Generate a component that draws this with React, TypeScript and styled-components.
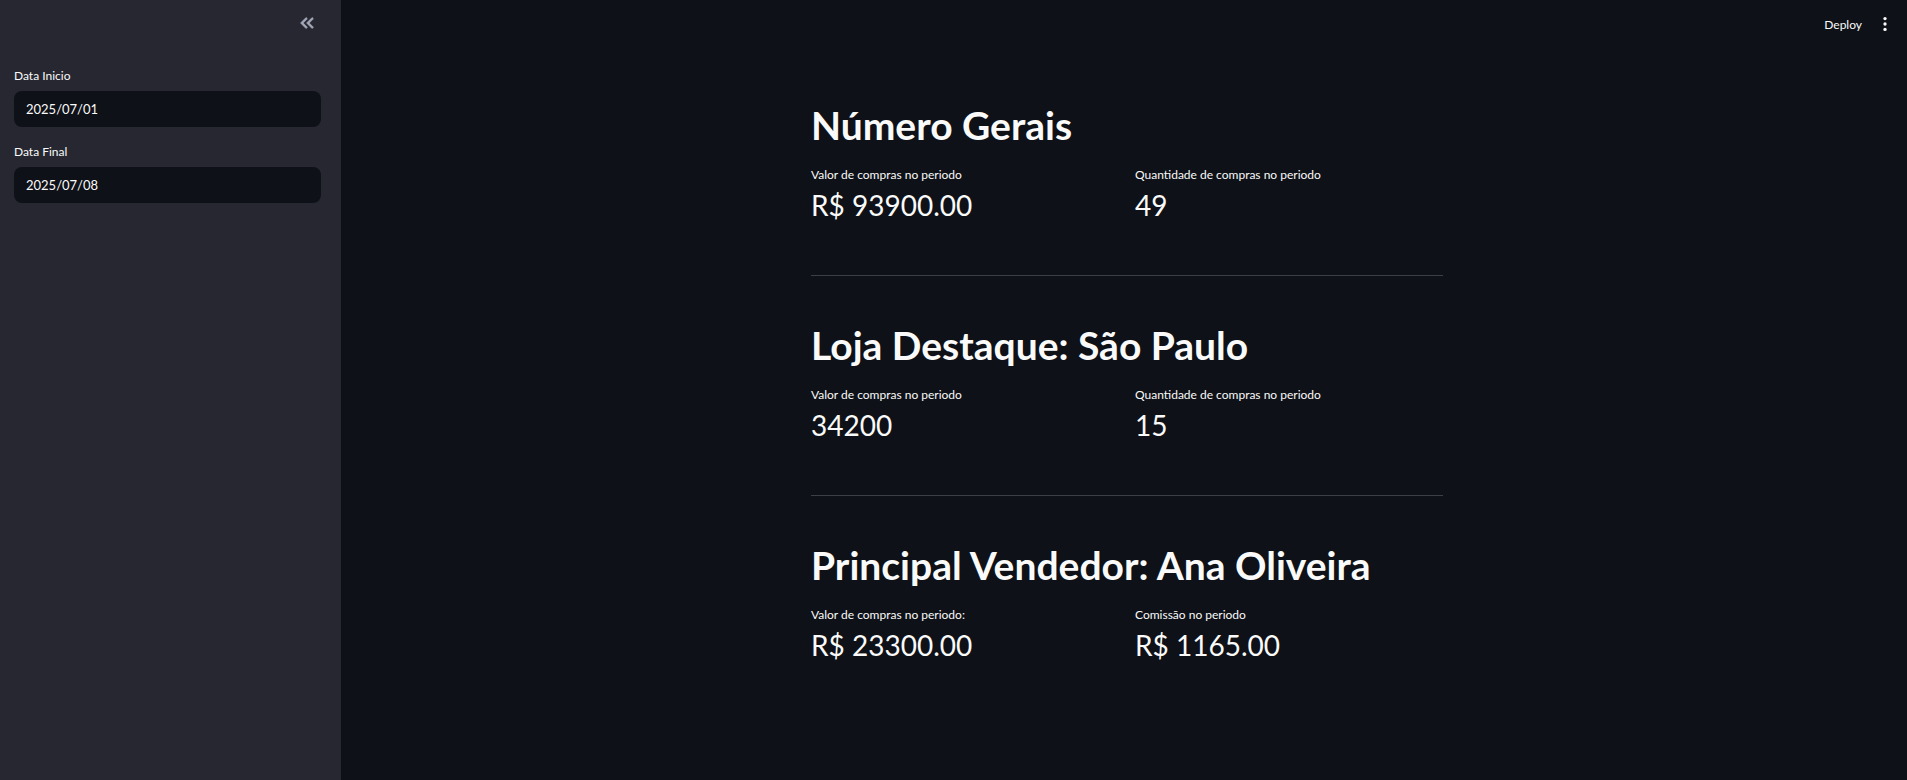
import React from "react";
import styled, { createGlobalStyle } from "styled-components";

const GlobalStyle = createGlobalStyle`
  html, body { margin: 0; padding: 0; background: #0e1117; }
  body { font-family: Lato, "Open Sans", sans-serif; color: #fafafa; }
  * { box-sizing: border-box; }
`;

const Shell = styled.div`
  display: flex;
  height: 780px;
  overflow: hidden;
`;

const Sidebar = styled.aside`
  width: 341px;
  flex-shrink: 0;
  background: #262730;
  padding: 0 20px 0 14px;
  display: flex;
  flex-direction: column;
`;

const SidebarTop = styled.div`
  height: 46px;
  display: flex;
  justify-content: flex-end;
  align-items: center;
  padding-right: 3px;
`;

const CollapseButton = styled.button`
  background: none;
  border: none;
  padding: 0;
  width: 22px;
  height: 22px;
  color: #a3a8b8;
  display: flex;
  align-items: center;
  justify-content: center;
  cursor: pointer;
`;

const Field = styled.div<{ $first?: boolean }>`
  display: flex;
  flex-direction: column;
  gap: 5px;
  margin-top: ${(p) => (p.$first ? "20px" : "15px")};
`;

const FieldLabel = styled.label`
  font-size: 12px;
  line-height: 20px;
  color: #fafafa;
`;

const DateBox = styled.div`
  height: 36px;
  background: #0e1117;
  border-radius: 8px;
  display: flex;
  align-items: center;
  padding: 0 12px;
  font-size: 13px;
  color: #fafafa;
`;

const Main = styled.main`
  flex: 1;
  display: flex;
  flex-direction: column;
  min-width: 0;
`;

const Header = styled.header`
  height: 48px;
  display: flex;
  justify-content: flex-end;
  align-items: center;
  gap: 11px;
  padding-right: 10px;
`;

const DeployButton = styled.button`
  background: none;
  border: none;
  color: #fafafa;
  font-family: inherit;
  font-size: 12px;
  padding: 0;
  cursor: pointer;
`;

const MenuButton = styled.button`
  background: none;
  border: none;
  padding: 0;
  width: 24px;
  height: 24px;
  color: #fafafa;
  display: flex;
  align-items: center;
  justify-content: center;
`;

const Content = styled.div`
  width: 632px;
  margin: 0 auto;
  padding-top: 49px;
  transform: translateX(3px);
`;

const Section = styled.section`
  display: flex;
  flex-direction: column;
`;

const Title = styled.h1`
  margin: 0;
  font-size: 39px;
  line-height: 56px;
  font-weight: 700;
  color: #fafafa;
`;

const MetricRow = styled.div`
  display: grid;
  grid-template-columns: 1fr 1fr;
  gap: 16px;
  margin-top: 12px;
`;

const Metric = styled.div`
  display: flex;
  flex-direction: column;
`;

const MetricLabel = styled.div`
  font-size: 12px;
  line-height: 20px;
  color: #fafafa;
`;

const MetricValue = styled.div`
  font-size: 28px;
  line-height: 40px;
  color: #fafafa;
`;

const Divider = styled.hr`
  border: none;
  height: 1px;
  background: rgba(250, 250, 250, 0.2);
  margin: 50px 0 41px;
`;

const DoubleChevron = () => (
  <svg width="22" height="22" viewBox="0 0 24 24" fill="currentColor" stroke="currentColor" strokeWidth="0.8">
    <path d="M17.59 18 19 16.59 14.42 12 19 7.41 17.59 6l-6 6z" />
    <path d="M11 18l1.41-1.41L7.83 12l4.58-4.59L11 6l-6 6z" />
  </svg>
);

const MoreVert = () => (
  <svg width="20" height="20" viewBox="0 0 24 24" fill="currentColor">
    <circle cx="12" cy="5.5" r="2" />
    <circle cx="12" cy="12" r="2" />
    <circle cx="12" cy="18.5" r="2" />
  </svg>
);

type MetricData = { label: string; value: string };

const sections: { title: string; metrics: MetricData[] }[] = [
  {
    title: "Número Gerais",
    metrics: [
      { label: "Valor de compras no periodo", value: "R$ 93900.00" },
      { label: "Quantidade de compras no periodo", value: "49" },
    ],
  },
  {
    title: "Loja Destaque: São Paulo",
    metrics: [
      { label: "Valor de compras no periodo", value: "34200" },
      { label: "Quantidade de compras no periodo", value: "15" },
    ],
  },
  {
    title: "Principal Vendedor: Ana Oliveira",
    metrics: [
      { label: "Valor de compras no periodo:", value: "R$ 23300.00" },
      { label: "Comissão no periodo", value: "R$ 1165.00" },
    ],
  },
];

export default function App() {
  return (
    <>
      <GlobalStyle />
      <Shell>
        <Sidebar>
          <SidebarTop>
            <CollapseButton aria-label="Collapse sidebar">
              <DoubleChevron />
            </CollapseButton>
          </SidebarTop>
          <Field $first>
            <FieldLabel>Data Inicio</FieldLabel>
            <DateBox>2025/07/01</DateBox>
          </Field>
          <Field>
            <FieldLabel>Data Final</FieldLabel>
            <DateBox>2025/07/08</DateBox>
          </Field>
        </Sidebar>
        <Main>
          <Header>
            <DeployButton>Deploy</DeployButton>
            <MenuButton aria-label="Menu">
              <MoreVert />
            </MenuButton>
          </Header>
          <Content>
            {sections.map((s, i) => (
              <Section key={s.title}>
                {i > 0 && <Divider />}
                <Title>{s.title}</Title>
                <MetricRow>
                  {s.metrics.map((m) => (
                    <Metric key={m.label}>
                      <MetricLabel>{m.label}</MetricLabel>
                      <MetricValue>{m.value}</MetricValue>
                    </Metric>
                  ))}
                </MetricRow>
              </Section>
            ))}
          </Content>
        </Main>
      </Shell>
    </>
  );
}
